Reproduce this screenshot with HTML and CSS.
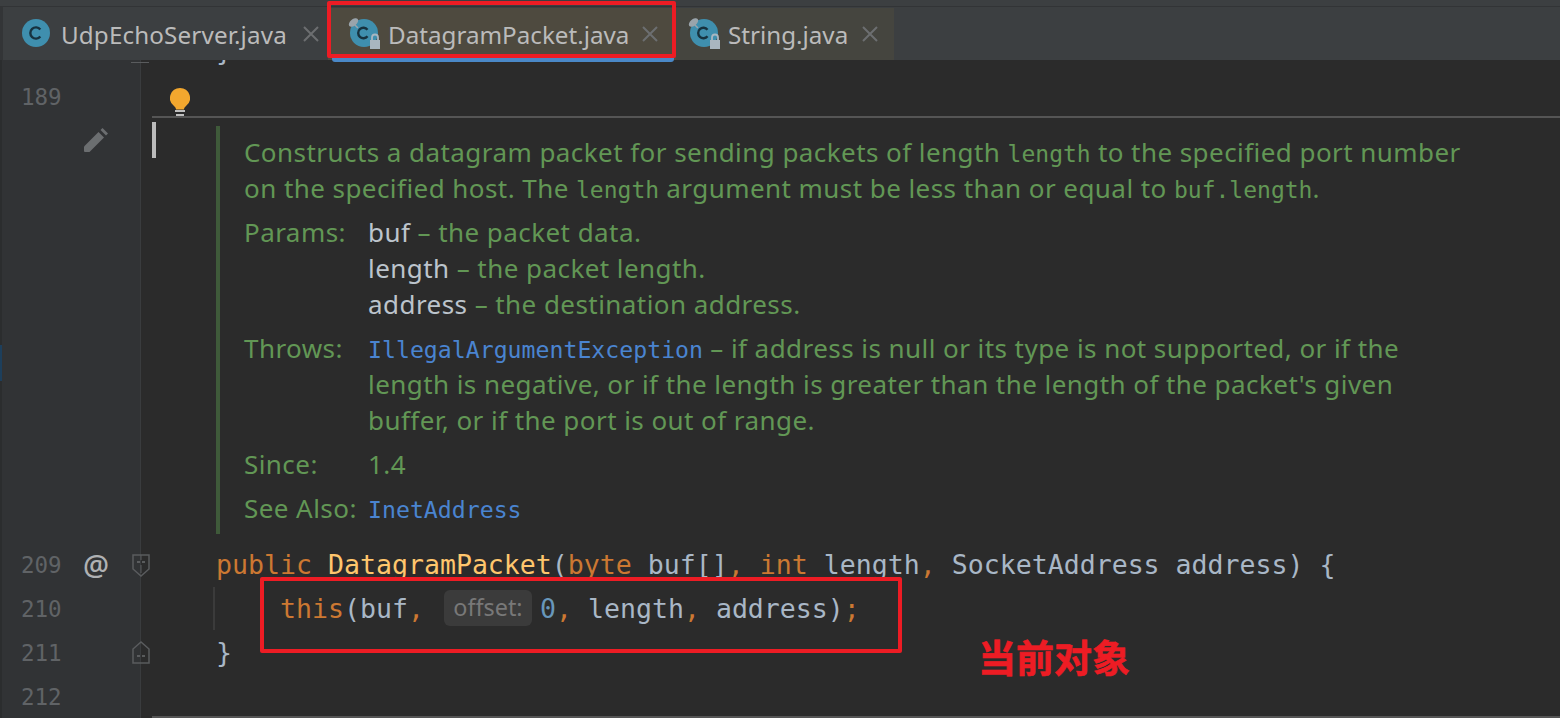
FILE: index.html
```html
<!DOCTYPE html>
<html lang="en">
<head>
<meta charset="utf-8">
<title>DatagramPacket.java</title>
<link rel="stylesheet" href="styles.css">
</head>
<body>
<div class="app">
  <div class="tabbar">
    <div class="tab tab-first">
      <svg class="ficon" viewBox="0 0 30 30"><circle cx="14" cy="14" r="14" fill="#3f8fae"/><path d="M18.300 10.500a5.600 5.600 0 1 0 0 7" fill="none" stroke="#17323f" stroke-width="2.400"/></svg>
      <span class="tabname">UdpEchoServer.java</span>
      <svg class="close" viewBox="0 0 16 16"><path d="M1 1l14 14M15 1L1 15" stroke="#6c6e70" stroke-width="2"/></svg>
    </div>
    <div class="tab tab-active">
      <svg class="ficon ficon-lock" viewBox="0 0 36 30"><circle cx="18" cy="14" r="14" fill="#3f8fae"/><path d="M21.500 10.800a5.200 5.200 0 1 0 0 6.400" fill="none" stroke="#17323f" stroke-width="2.400"/><path d="M9 6l3 3" stroke="#9aa4ab" stroke-width="1.500"/><ellipse cx="7.500" cy="3.500" rx="5.500" ry="3.200" fill="#9aa4ab" transform="rotate(-40 7.500 3.500)"/><rect x="24" y="21" width="10" height="9" fill="#a9b6c0"/><path d="M26 21v-2.500a3 3 0 0 1 6 0V21" fill="none" stroke="#a9b6c0" stroke-width="1.800"/></svg>
      <span class="tabname">DatagramPacket.java</span>
      <svg class="close" viewBox="0 0 16 16"><path d="M1 1l14 14M15 1L1 15" stroke="#6c6e70" stroke-width="2"/></svg>
    </div>
    <div class="tab tab-third">
      <svg class="ficon ficon-lock" viewBox="0 0 36 30"><circle cx="16" cy="14" r="14" fill="#3f8fae"/><path d="M19.500 10.800a5.200 5.200 0 1 0 0 6.400" fill="none" stroke="#17323f" stroke-width="2.400"/><path d="M7 6l3 3" stroke="#9aa4ab" stroke-width="1.500"/><ellipse cx="5.500" cy="3.500" rx="5.500" ry="3.200" fill="#9aa4ab" transform="rotate(-40 5.500 3.500)"/><rect x="22" y="21" width="10" height="9" fill="#a9b6c0"/><path d="M24 21v-2.500a3 3 0 0 1 6 0V21" fill="none" stroke="#a9b6c0" stroke-width="1.800"/></svg>
      <span class="tabname">String.java</span>
      <svg class="close" viewBox="0 0 16 16"><path d="M1 1l14 14M15 1L1 15" stroke="#6c6e70" stroke-width="2"/></svg>
    </div>
  </div>

  <div class="row row-clip">
    <div class="gutter"><span class="fold-stub"></span></div>
    <div class="code code-clip"><span class="plain">}</span></div>
  </div>

  <div class="row row-189">
    <div class="gutter gutter-top"><span class="num">189</span></div>
    <div class="code">
      <svg class="bulb" viewBox="0 0 20 28"><path d="M10 0a10 10 0 0 0-6 18c1.500 1.200 2 2.500 2 3.500h8c0-1 .5-2.300 2-3.500A10 10 0 0 0 10 0z" fill="#f2a72e"/><rect x="5" y="22" width="10" height="2" fill="#c0c0c0"/><rect x="6" y="26" width="8" height="2" fill="#c0c0c0"/></svg>
    </div>
  </div>

  <div class="row row-doc">
    <div class="gutter">
      <svg class="pencil" viewBox="0 0 24 24"><path d="M0 18.500L14.500 4l5.500 5.500L5.500 24H1a1 1 0 0 1-1-1z" fill="#6b6e70"/><path d="M16.500 2l2-2 5.500 5.500-2 2z" fill="#6b6e70"/></svg>
    </div>
    <div class="docwrap">
      <div class="caret"></div>
      <div class="doc">
        <p class="para">Constructs a datagram packet for sending packets of length <code class="m">length</code> to the specified port number<br>on the specified host. The <code class="m">length</code> argument must be less than or equal to <code class="m">buf.length</code>.</p>
        <div class="tags">
          <div class="label">Params:</div>
          <div class="value"><span class="pn">buf</span> – the packet data.<br><span class="pn">length</span> – the packet length.<br><span class="pn">address</span> – the destination address.</div>
          <div class="label">Throws:</div>
          <div class="value"><code class="link">IllegalArgumentException</code> – if address is null or its type is not supported, or if the<br>length is negative, or if the length is greater than the length of the packet's given<br>buffer, or if the port is out of range.</div>
          <div class="label">Since:</div>
          <div class="value">1.4</div>
          <div class="label">See Also:</div>
          <div class="value"><code class="link">InetAddress</code></div>
        </div>
      </div>
    </div>
  </div>

  <div class="row">
    <div class="gutter"><span class="num">209</span><span class="at">@</span>
      <svg class="fold" viewBox="0 0 18 24"><path d="M1 2h16v14l-8 7-8-7z" fill="none" stroke="#5a5c5e" stroke-width="1.500"/><path d="M5 9h3M10 9h3" stroke="#6a6c6e" stroke-width="1.500"/><path d="M9 2v5M9 12v8" stroke="#5a5c5e"/></svg>
    </div>
    <div class="code"><span class="kw">public</span> <span class="fn">DatagramPacket</span><span class="plain">(</span><span class="kw">byte</span> <span class="plain">buf[]</span><span class="kw">,</span> <span class="kw">int</span> <span class="plain">length</span><span class="kw">,</span> <span class="plain">SocketAddress address) {</span></div>
  </div>
  <div class="row">
    <div class="gutter"><span class="num">210</span></div>
    <div class="code code-body"><span class="guide"></span><span class="kw">this</span><span class="plain">(buf</span><span class="kw">,</span> <span class="hint">offset:</span><span class="number">0</span><span class="kw">,</span> <span class="plain">length</span><span class="kw">,</span> <span class="plain">address)</span><span class="kw">;</span></div>
  </div>
  <div class="row">
    <div class="gutter"><span class="num">211</span>
      <svg class="fold" viewBox="0 0 18 24"><path d="M1 22h16V8L9 1 1 8z" fill="none" stroke="#5a5c5e" stroke-width="1.500"/><path d="M5 15h3M10 15h3" stroke="#6a6c6e" stroke-width="1.500"/></svg>
    </div>
    <div class="code"><span class="plain">}</span></div>
  </div>
  <div class="row">
    <div class="gutter"><span class="num">212</span></div>
    <div class="code"></div>
  </div>

  <div class="hbar"></div>
  <div class="mark mark-tab"></div>
  <div class="mark mark-code"></div>
  <div class="note">当前对象</div>
  <div class="edge-spot"></div>
</div>
</body>
</html>
```

FILE: styles.css
```css
* { box-sizing: border-box; }
html, body { margin: 0; height: 100%; background: #2b2b2b; }
.app { position: relative; width: 1560px; height: 718px; overflow: hidden; font-family: "Noto Sans", sans-serif; }

.tabbar { display: flex; height: 60px; padding: 8px 0 0 4px; background: #3c3f41; box-shadow: inset 0 6px 0 #3c3f41, inset 0 7px 0 #323436, inset 3px 0 0 #333537; }
.tab { position: relative; display: flex; align-items: center; height: 52px; color: #bbbbbb; }
.tab-first { width: 324px; padding-left: 18px; }
.tab-active { width: 348px; padding-left: 18px; background: #4e4a3f; }
.tab-active::after { content: ""; position: absolute; left: 4px; right: 2px; bottom: -2px; height: 4px; background: #4a88c7; border-radius: 0 0 3px 3px; }
.tab-third { width: 218px; padding-left: 12px; background: #45453f; }
.ficon { flex: none; width: 30px; height: 30px; overflow: visible; }
.ficon-lock { width: 36px; }
.tabname { margin-left: 9px; padding-top: 1px; font-size: 24.200px; white-space: nowrap; line-height: 52px; }
.tab-first .tabname { letter-spacing: 0.15px; }
.tab-active .tabname { margin-left: 6px; }
.tab-third .tabname { margin-left: 4px; }
.close { position: absolute; top: 18px; right: 9px; width: 16px; height: 16px; }
.tab-active .close { right: 18px; }
.tab-third .close { right: 16px; }

.row { display: flex; height: 44px; }
.row-clip { height: 15px; overflow: hidden; }
.row-189 { height: 41px; }
.row-doc { height: 427px; }
.gutter { position: relative; flex: none; display: flex; align-items: center; width: 141px; padding-left: 21px; background: #313335; border-right: 1px solid #3a3c3e; border-left: 2px solid #2b2d2e; }
.gutter-top { align-items: flex-start; }
.gutter-top .num { height: 44px; }
.num { width: 41px; margin-left: -2px; font: 22.500px/44px "DejaVu Sans Mono", monospace; color: #606366; }
.at { margin-left: 21px; font: 500 29px/40px "Noto Sans", sans-serif; color: #afb1b3; }
.fold { position: absolute; left: 130px; top: 10px; width: 18px; height: 24px; }
.fold-stub { position: absolute; left: 129px; top: 2px; width: 18px; height: 1px; background: #5a5c5e; }
.pencil { position: absolute; left: 82px; top: 12px; width: 24px; height: 24px; }

.code { position: relative; flex: 1; padding-left: 75px; font: 26.570px/44px "DejaVu Sans Mono", monospace; white-space: pre; color: #a9b7c6; }
.code-clip { margin-top: -31px; height: 44px; }
.code-body { padding-left: 139px; }
.kw { color: #cc7832; }
.fn { color: #ffc66d; }
.plain { color: #a9b7c6; }
.number { color: #6897bb; }
.guide { position: absolute; left: 72px; top: 0; width: 2px; height: 43px; background: #3b3b3b; }
.hint { display: inline-block; width: 88px; height: 36px; margin: 0 8px 0 4px; border-radius: 6px; background: #3b3b3b; color: #787878; font: 23.400px/34px "Noto Sans", sans-serif; text-align: center; vertical-align: 2px; }
.bulb { position: absolute; left: 29px; top: 13px; width: 20px; height: 28px; }

.docwrap { flex: 1; display: flex; margin-left: 11px; border-top: 2px solid #555555; padding-top: 4px; }
.caret { flex: none; width: 4px; height: 36px; background: #bbbbbb; }
.doc { width: 1340px; height: 408px; margin: 4px 0 0 60px; padding: 8px 0 0 24px; border-left: 4px solid #3f5a3a; color: #629755; font-size: 26px; letter-spacing: 0.44px; line-height: 36px; white-space: nowrap; }
.para { margin: 0 0 8px; }
.m { font: 23px/1 "DejaVu Sans Mono", monospace; letter-spacing: 0; }
.tags { display: grid; grid-template-columns: 124px 1fr; row-gap: 8px; }
.pn { color: #bcc4cc; }
.link { font: 23.200px/1 "DejaVu Sans Mono", monospace; letter-spacing: 0; color: #4a84d0; }

.hbar { position: absolute; left: 152px; right: 0; bottom: 0; height: 2px; background: #555555; }
.mark { position: absolute; border: 4px solid #ed1c24; border-radius: 2px; }
.mark-tab { left: 327px; top: 1px; width: 349px; height: 57px; }
.mark-code { left: 260px; top: 577px; width: 642px; height: 76px; }
.note { position: absolute; left: 978px; top: 630px; color: #ed1c24; font: 700 38px/52px "Noto Sans CJK SC", sans-serif; -webkit-text-stroke: 0.6px #ed1c24; white-space: nowrap; }
.edge-spot { position: absolute; left: 0; top: 345px; width: 2px; height: 36px; background: #1d3f5c; }
```
